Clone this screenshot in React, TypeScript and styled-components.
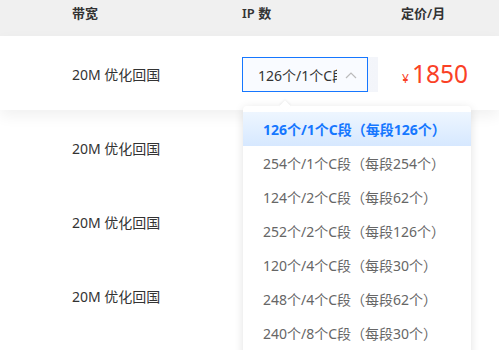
import React from "react";
import styled, { createGlobalStyle } from "styled-components";

const GlobalStyle = createGlobalStyle`
  html, body {
    margin: 0;
    padding: 0;
    background: #ffffff;
  }
  body {
    font-family: "Noto Sans", "Noto Sans CJK SC", sans-serif;
    overflow: hidden;
  }
`;

const Page = styled.div`
  width: 499px;
  height: 350px;
  overflow: hidden;
  position: relative;
`;

const HeaderRow = styled.div`
  display: grid;
  grid-template-columns: 170px 159px 1fr;
  height: 36px;
  align-items: center;
  padding-left: 72px;
  background: #f0f0f0;
  font-size: 13px;
  font-weight: 600;
  color: #333;
  padding-bottom: 6px;
  box-sizing: content-box;
  margin-top: -6px;
`;

const Row = styled.div<{ $active?: boolean }>`
  display: grid;
  grid-template-columns: 170px 159px 1fr;
  height: 74px;
  box-sizing: border-box;
  padding-top: 2px;
  align-items: center;
  padding-left: 72px;
  background: #fff;
  position: relative;
  z-index: ${(p) => (p.$active ? 2 : 1)};
  box-shadow: ${(p) => (p.$active ? "0 6px 14px rgba(0,0,0,0.06)" : "none")};
  font-size: 14px;
  color: #333;
`;

const Cell = styled.div`
  display: flex;
  align-items: center;
  white-space: nowrap;
`;

const SelectWrap = styled.div`
  position: relative;
  width: 136px;
  height: 35px;
  margin-top: 1px;
  background: linear-gradient(90deg, #f8fbff, #f3f5fa);
`;

const SelectBox = styled.div`
  width: 126px;
  height: 35px;
  box-sizing: border-box;
  border: 1px solid #1677ff;
  background: #f9fbff;
  display: flex;
  align-items: center;
  padding-left: 15px;
  padding-right: 10px;
  gap: 8px;
  font-size: 14px;
  color: #333;
`;

const SelectText = styled.span`
  flex: 1;
  overflow: hidden;
  white-space: nowrap;
`;

const Dropdown = styled.div`
  position: absolute;
  top: 49px;
  left: 1px;
  width: 228px;
  height: 260px;
  background: #fff;
  border-radius: 4px;
  box-shadow: 0 2px 10px rgba(0, 0, 0, 0.12);
  padding-top: 6px;
  z-index: 10;
  &::before {
    content: "";
    position: absolute;
    top: -4px;
    left: 38px;
    width: 8px;
    height: 8px;
    background: #fff;
    transform: rotate(45deg);
    box-shadow: -1px -1px 2px rgba(0, 0, 0, 0.06);
  }
`;

const Option = styled.div<{ $selected?: boolean }>`
  position: relative;
  height: 34px;
  display: flex;
  align-items: center;
  padding-left: 20px;
  font-size: 14px;
  white-space: nowrap;
  color: ${(p) => (p.$selected ? "#1677ff" : "#666")};
  font-weight: ${(p) => (p.$selected ? 700 : 400)};
  background: ${(p) =>
    p.$selected ? "linear-gradient(180deg, #eef6ff, #d6e8ff)" : "#fff"};
`;

const Price = styled.div`
  display: flex;
  align-items: baseline;
  color: #fa4126;
  margin-left: 1px;
`;

const Yen = styled.span`
  font-size: 12px;
  margin-right: 3px;
`;

const Amount = styled.span`
  font-size: 24.5px;
  line-height: 1;
`;

const Chevron = () => (
  <svg width="12" height="8" viewBox="0 0 12 8" fill="none">
    <path d="M1 7 L6 2 L11 7" stroke="#bbb" strokeWidth="1.2" />
  </svg>
);

const options = [
  "126个/1个C段（每段126个）",
  "254个/1个C段（每段254个）",
  "124个/2个C段（每段62个）",
  "252个/2个C段（每段126个）",
  "120个/4个C段（每段30个）",
  "248个/4个C段（每段62个）",
  "240个/8个C段（每段30个）",
];

export default function App() {
  return (
    <Page>
      <GlobalStyle />
      <HeaderRow>
        <Cell>带宽</Cell>
        <Cell>IP 数</Cell>
        <Cell>定价/月</Cell>
      </HeaderRow>
      <Row $active>
        <Cell>20M 优化回国</Cell>
        <Cell>
          <SelectWrap>
            <SelectBox>
              <SelectText>126个/1个C段</SelectText>
              <Chevron />
            </SelectBox>
            <Dropdown>
              {options.map((o, i) => (
                <Option key={o} $selected={i === 0}>
                  {o}
                </Option>
              ))}
            </Dropdown>
          </SelectWrap>
        </Cell>
        <Cell>
          <Price>
            <Yen>¥</Yen>
            <Amount>1850</Amount>
          </Price>
        </Cell>
      </Row>
      <Row>
        <Cell>20M 优化回国</Cell>
      </Row>
      <Row>
        <Cell>20M 优化回国</Cell>
      </Row>
      <Row>
        <Cell>20M 优化回国</Cell>
      </Row>
    </Page>
  );
}
